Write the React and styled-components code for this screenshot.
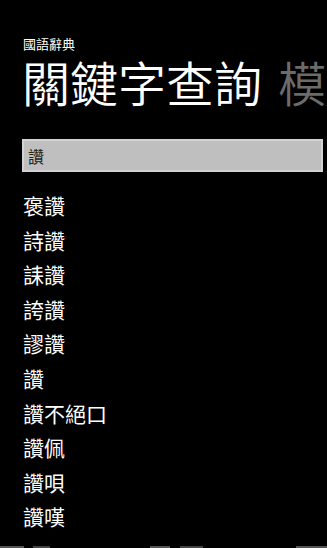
import styled, { createGlobalStyle } from "styled-components";

const GlobalStyle = createGlobalStyle`
  html, body {
    margin: 0;
    padding: 0;
    background: #000;
  }
  body {
    font-family: "Noto Sans CJK TC", "Noto Sans", sans-serif;
    color: #fff;
    overflow: hidden;
  }
`;

const Page = styled.div`
  width: 327px;
  height: 548px;
  overflow: hidden;
  display: flex;
  flex-direction: column;
  background: #000;
`;

const AppName = styled.div`
  margin: 37px 0 0 23px;
  font-size: 13px;
  line-height: 13px;
  color: #fff;
`;

const PivotRow = styled.div`
  margin: 6px 0 0 22px;
  display: flex;
  gap: 16px;
  white-space: nowrap;
  font-size: 48px;
  line-height: 50px;
  font-weight: 350;
`;

const PivotItem = styled.span`
  color: ${(p) => (p.$active ? "#fff" : "#6b6b6b")};
`;

const SearchBox = styled.div`
  margin: 33px 0 0 22px;
  width: 293px;
  height: 29px;
  background: #bfbfbf;
  border: 2px solid #d2d2d2;
  display: flex;
  align-items: center;
  padding-left: 4px;
  font-size: 16px;
  color: #222;
`;

const List = styled.ul`
  list-style: none;
  margin: 16px 0 0 0;
  padding: 0 0 0 23px;
`;

const Item = styled.li`
  font-size: 21px;
  line-height: 34.6px;
  color: #fff;
`;

const BottomBar = styled.div`
  margin-top: auto;
  height: 2px;
  display: flex;
  align-items: flex-end;
  flex-shrink: 0;
`;

const Chip = styled.div`
  height: 2px;
  width: ${(p) => p.$w}px;
  margin-left: ${(p) => p.$ml}px;
  background: ${(p) => p.$c};
`;

const words = [
  "褒讚",
  "詩讚",
  "誄讚",
  "誇讚",
  "謬讚",
  "讚",
  "讚不絕口",
  "讚佩",
  "讚唄",
  "讚嘆",
];

export default function App() {
  return (
    <Page>
      <GlobalStyle />
      <AppName>國語辭典</AppName>
      <PivotRow>
        <PivotItem $active>關鍵字查詢</PivotItem>
        <PivotItem>模糊查詢</PivotItem>
      </PivotRow>
      <SearchBox>讚</SearchBox>
      <List>
        {words.map((w) => (
          <Item key={w}>{w}</Item>
        ))}
      </List>
      <BottomBar>
        <Chip $w={24} $ml={0} $c="#555" />
        <Chip $w={17} $ml={9} $c="#444" />
        <Chip $w={20} $ml={100} $c="#555" />
        <Chip $w={23} $ml={10} $c="#444" />
        <Chip $w={31} $ml={93} $c="#555" />
      </BottomBar>
    </Page>
  );
}
